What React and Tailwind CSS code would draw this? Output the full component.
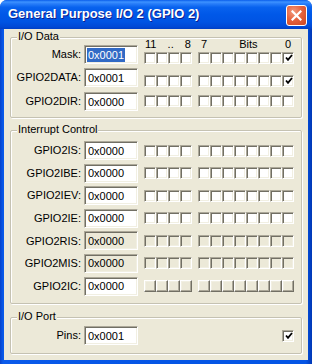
import React from 'react';

const FONT = "font-['Liberation_Sans',Arial,sans-serif]";

const Check = () => (
    <svg width="8" height="8" viewBox="0 0 8 8" className="block">
        <path d="M1 3.5 L3 5.8 L7 1" stroke="#000" strokeWidth="1.8" fill="none" />
    </svg>
);

// 12px checkbox cell, three looks: normal (white, sunken), off (grey, sunken), raised (button-like)
const Box = ({ checked = false, look = 'normal' }) => {
    const cls = {
        normal: 'bg-white border-t-[#ACA899] border-l-[#ACA899] border-b-white border-r-white shadow-[inset_1px_1px_0_#716F64,inset_-1px_-1px_0_#F1EFE2]',
        off: 'bg-[#ECE9D8] border-t-[#ACA899] border-l-[#ACA899] border-b-white border-r-white shadow-[inset_1px_1px_0_#716F64,inset_-1px_-1px_0_#F1EFE2]',
        raised: 'bg-[#ECE9D8] border-t-white border-l-white border-b-[#716F64] border-r-[#716F64] shadow-[inset_-1px_-1px_0_#ACA899,inset_1px_1px_0_#F1EFE2]',
    }[look];
    return (
        <div className={`w-[12px] h-[12px] border flex items-end justify-start pl-[2px] pb-[1px] ${cls}`}>
            {checked && <Check />}
        </div>
    );
};

const Bits = ({ look, bit0 = false }) => (
    <div className="flex ml-[6px]">
        <div className="flex">
            {[0, 1, 2, 3].map(i => <Box key={i} look={look} />)}
        </div>
        <div className="flex ml-[6px]">
            {[0, 1, 2, 3, 4, 5, 6, 7].map(i => <Box key={i} look={look} checked={i === 7 && bit0} />)}
        </div>
    </div>
);

const TextBox = ({ value, disabled = false, selected = false }) => (
    <div
        className={`w-[54px] h-[19px] border border-t-[#ACA899] border-l-[#ACA899] border-b-white border-r-white shadow-[inset_1px_1px_0_#716F64,inset_-1px_-1px_0_#F1EFE2] flex items-center pl-[2px] ${disabled ? 'bg-[#ECE9D8]' : 'bg-white'}`}
    >
        <span className={`leading-[14px] px-[1px] ${selected ? 'bg-[#316AC5] text-white' : 'text-black'}`}>{value}</span>
    </div>
);

const Label = ({ children }) => (
    <div className="w-[71px] text-right pr-[1px] text-black">{children}</div>
);

const Group = ({ title, className = '', children }) => (
    <div className={`relative mx-[6px] border border-[#C5C2B2] rounded-[2px] shadow-[inset_1px_1px_0_#fff,1px_1px_0_#fff] ${className}`}>
        <span className="absolute -top-[8px] left-[6px] px-[1px] bg-[#ECE9D8] leading-[13px] text-black">{title}</span>
        {children}
    </div>
);

const Row = ({ label, value, disabled, look = 'normal', bit0 }) => (
    <div className="flex items-center h-[19px]">
        <Label>{label}</Label>
        <div className="ml-[2px]"><TextBox value={value} disabled={disabled} /></div>
        <Bits look={look} bit0={bit0} />
    </div>
);

const App = () => {
    return (
        <div className={`${FONT} text-[11px] w-[312px] h-[364px] flex flex-col rounded-t-[7px] overflow-hidden bg-[linear-gradient(to_right,#0843CB,#0A5AEA_3px,#0555E5_50%,#0555E5_98%,#0037B5)]`}>
            {/* title bar */}
            <div className="h-[29px] shrink-0 flex items-center pl-[8px] pr-[5px] bg-[linear-gradient(to_bottom,#0A5DEB_0%,#3D93FF_7%,#2B80FA_12%,#0862EE_25%,#0058E8_50%,#0054E3_75%,#0049D6_92%,#003FC4_100%)]">
                <span className="text-white font-bold text-[13px] [text-shadow:1px_1px_0_#0F1F8F] flex-1 pb-[1px]">
                    General Purpose I/O 2 (GPIO 2)
                </span>
                <div className="w-[21px] h-[21px] rounded-[3px] border border-white flex items-center justify-center bg-[radial-gradient(circle_at_35%_30%,#F29A7E_0%,#E5633E_45%,#CC4520_100%)] mt-[2px]">
                    <svg width="11" height="11" viewBox="0 0 11 11">
                        <path d="M1.5 1.5 L9.5 9.5 M9.5 1.5 L1.5 9.5" stroke="#fff" strokeWidth="2.2" strokeLinecap="square" />
                    </svg>
                </div>
            </div>

            {/* client area */}
            <div className="flex-1 mx-[4px] mb-[4px] bg-[#ECE9D8] flex flex-col pt-[8px]">
                <Group title="I/O Data" className="h-[81px] flex">
                    <div className="flex flex-col pt-[7px]">
                        <div className="flex items-center h-[19px]">
                            <Label>Mask:</Label>
                            <div className="ml-[2px]"><TextBox value="0x0001" selected /></div>
                        </div>
                        <div className="flex items-center h-[19px] mt-[4px]">
                            <Label>GPIO2DATA:</Label>
                            <div className="ml-[2px]"><TextBox value="0x0001" /></div>
                        </div>
                        <div className="flex items-center h-[19px] mt-[5px]">
                            <Label>GPIO2DIR:</Label>
                            <div className="ml-[2px]"><TextBox value="0x0000" /></div>
                        </div>
                    </div>
                    <div className="flex flex-col">
                        <div className="flex h-[14px] leading-[13px] text-black ml-[6px]">
                            <div className="w-[48px] flex justify-between pl-[1px] pr-[1px]">
                                <span>11</span><span>..</span><span>8</span>
                            </div>
                            <div className="w-[96px] ml-[6px] flex pl-[3px] pr-[3px]">
                                <span>7</span><span className="ml-[32px]">Bits</span><span className="ml-auto">0</span>
                            </div>
                        </div>
                        <Bits bit0 />
                        <div className="mt-[11px]"><Bits bit0 /></div>
                        <div className="mt-[8px]"><Bits /></div>
                    </div>
                </Group>

                <Group title="Interrupt Control" className="h-[174px] mt-[12px] flex flex-col gap-[3.6px] pt-[10px]">
                    <Row label="GPIO2IS:" value="0x0000" />
                    <Row label="GPIO2IBE:" value="0x0000" />
                    <Row label="GPIO2IEV:" value="0x0000" />
                    <Row label="GPIO2IE:" value="0x0000" />
                    <Row label="GPIO2RIS:" value="0x0000" disabled look="off" />
                    <Row label="GPIO2MIS:" value="0x0000" disabled look="off" />
                    <Row label="GPIO2IC:" value="0x0000" look="raised" />
                </Group>

                <Group title="I/O Port" className="h-[37px] mt-[13px] flex items-start pt-[8px]">
                    <div className="flex items-center h-[19px] w-full">
                        <Label>Pins:</Label>
                        <div className="ml-[2px]"><TextBox value="0x0001" /></div>
                        <div className="ml-auto mr-[7px]"><Box checked /></div>
                    </div>
                </Group>
            </div>
        </div>
    );
};

export default App;
